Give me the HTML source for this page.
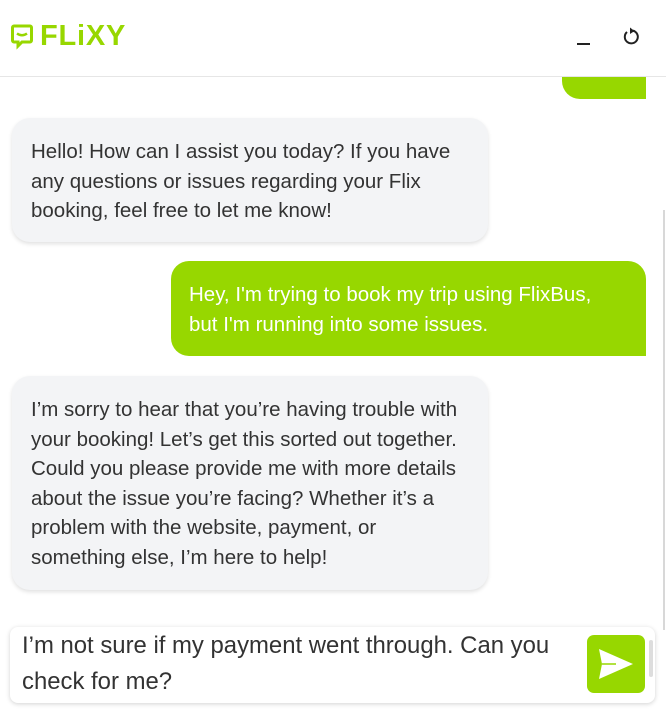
<!DOCTYPE html>
<html><head><style>
body{margin:0;width:666px;height:713px;background:#fff;font-family:"Liberation Sans",sans-serif;position:relative;overflow:hidden}
.hdr{position:absolute;left:0;top:0;width:666px;height:76px;border-bottom:1px solid #e6e6e6;background:#fff}
.logo{position:absolute;left:40px;top:20px;font-size:29px;font-weight:bold;color:#97d700;letter-spacing:0.8px}
.b{position:absolute;font-size:20.5px;line-height:29.6px;color:#333;box-sizing:border-box;white-space:nowrap}
.bot{background:#f3f4f6;border-radius:18px;box-shadow:0 2px 4px rgba(0,0,0,.12);padding:19px 19px}
.me{background:#97d700;color:#fff;border-radius:18px 18px 0 18px;padding:19px 18px}
</style></head><body>
<div class="hdr">
<svg style="position:absolute;left:11px;top:24px" width="22" height="28" viewBox="0 0 22 28"><path d="M3 2h16a1.5 1.5 0 0 1 1.5 1.5v13a1.5 1.5 0 0 1-1.5 1.5H11l-4 4v-4H3a1.5 1.5 0 0 1-1.5-1.5v-13A1.5 1.5 0 0 1 3 2z" fill="none" stroke="#97d700" stroke-width="3"/><path d="M6 9.5q5 3.5 10 0" fill="none" stroke="#97d700" stroke-width="2.5"/></svg>
<div class="logo">FLiXY</div>
<div style="position:absolute;left:577px;top:43px;width:13px;height:2px;background:#222"></div>
<svg style="position:absolute;left:621px;top:27px" width="20" height="20" viewBox="0 0 20 20"><path d="M6 5A6.5 6.5 0 1 0 12 3.6" fill="none" stroke="#222" stroke-width="2"/><path d="M9 0.5l4.5 3.5-4.5 3z" fill="#222"/></svg>
</div>
<div style="position:absolute;left:562px;top:77px;width:84px;height:22px;background:#97d700;border-radius:0 0 0 18px"></div>
<div style="position:absolute;left:663px;top:210px;width:2px;height:420px;background:#d8d8d8"></div>
<div class="b bot" style="left:12px;top:118px;width:476px;height:124px">Hello! How can I assist you today? If you have<br>any questions or issues regarding your Flix<br>booking, feel free to let me know!</div>
<div class="b me" style="left:171px;top:261px;width:475px;height:95px">Hey, I'm trying to book my trip using FlixBus,<br>but I'm running into some issues.</div>
<div class="b bot" style="left:12px;top:376px;width:476px;height:214px">I’m sorry to hear that you’re having trouble with<br>your booking! Let’s get this sorted out together.<br>Could you please provide me with more details<br>about the issue you’re facing? Whether it’s a<br>problem with the website, payment, or<br>something else, I’m here to help!</div>
<div style="position:absolute;left:10px;top:627px;width:645px;height:76px;background:#fff;border-radius:8px;box-shadow:0 1px 5px rgba(0,0,0,.18)"></div>
<div style="position:absolute;left:22px;top:628px;font-size:23.9px;line-height:36px;color:#333;white-space:nowrap">I’m not sure if my payment went through. Can you<br>check for me?</div>
<div style="position:absolute;left:587px;top:635px;width:58px;height:58px;background:#97d700;border-radius:7px"></div>
<svg style="position:absolute;left:598px;top:648px" width="36" height="32" viewBox="0 0 36 32"><path d="M1 1L35 16 1 31 4 16z" fill="#fff"/><path d="M4 16h14" stroke="#97d700" stroke-width="1.5"/></svg>
<div style="position:absolute;left:649px;top:640px;width:4px;height:37px;background:#ddd;border-radius:2px"></div>
</body></html>
